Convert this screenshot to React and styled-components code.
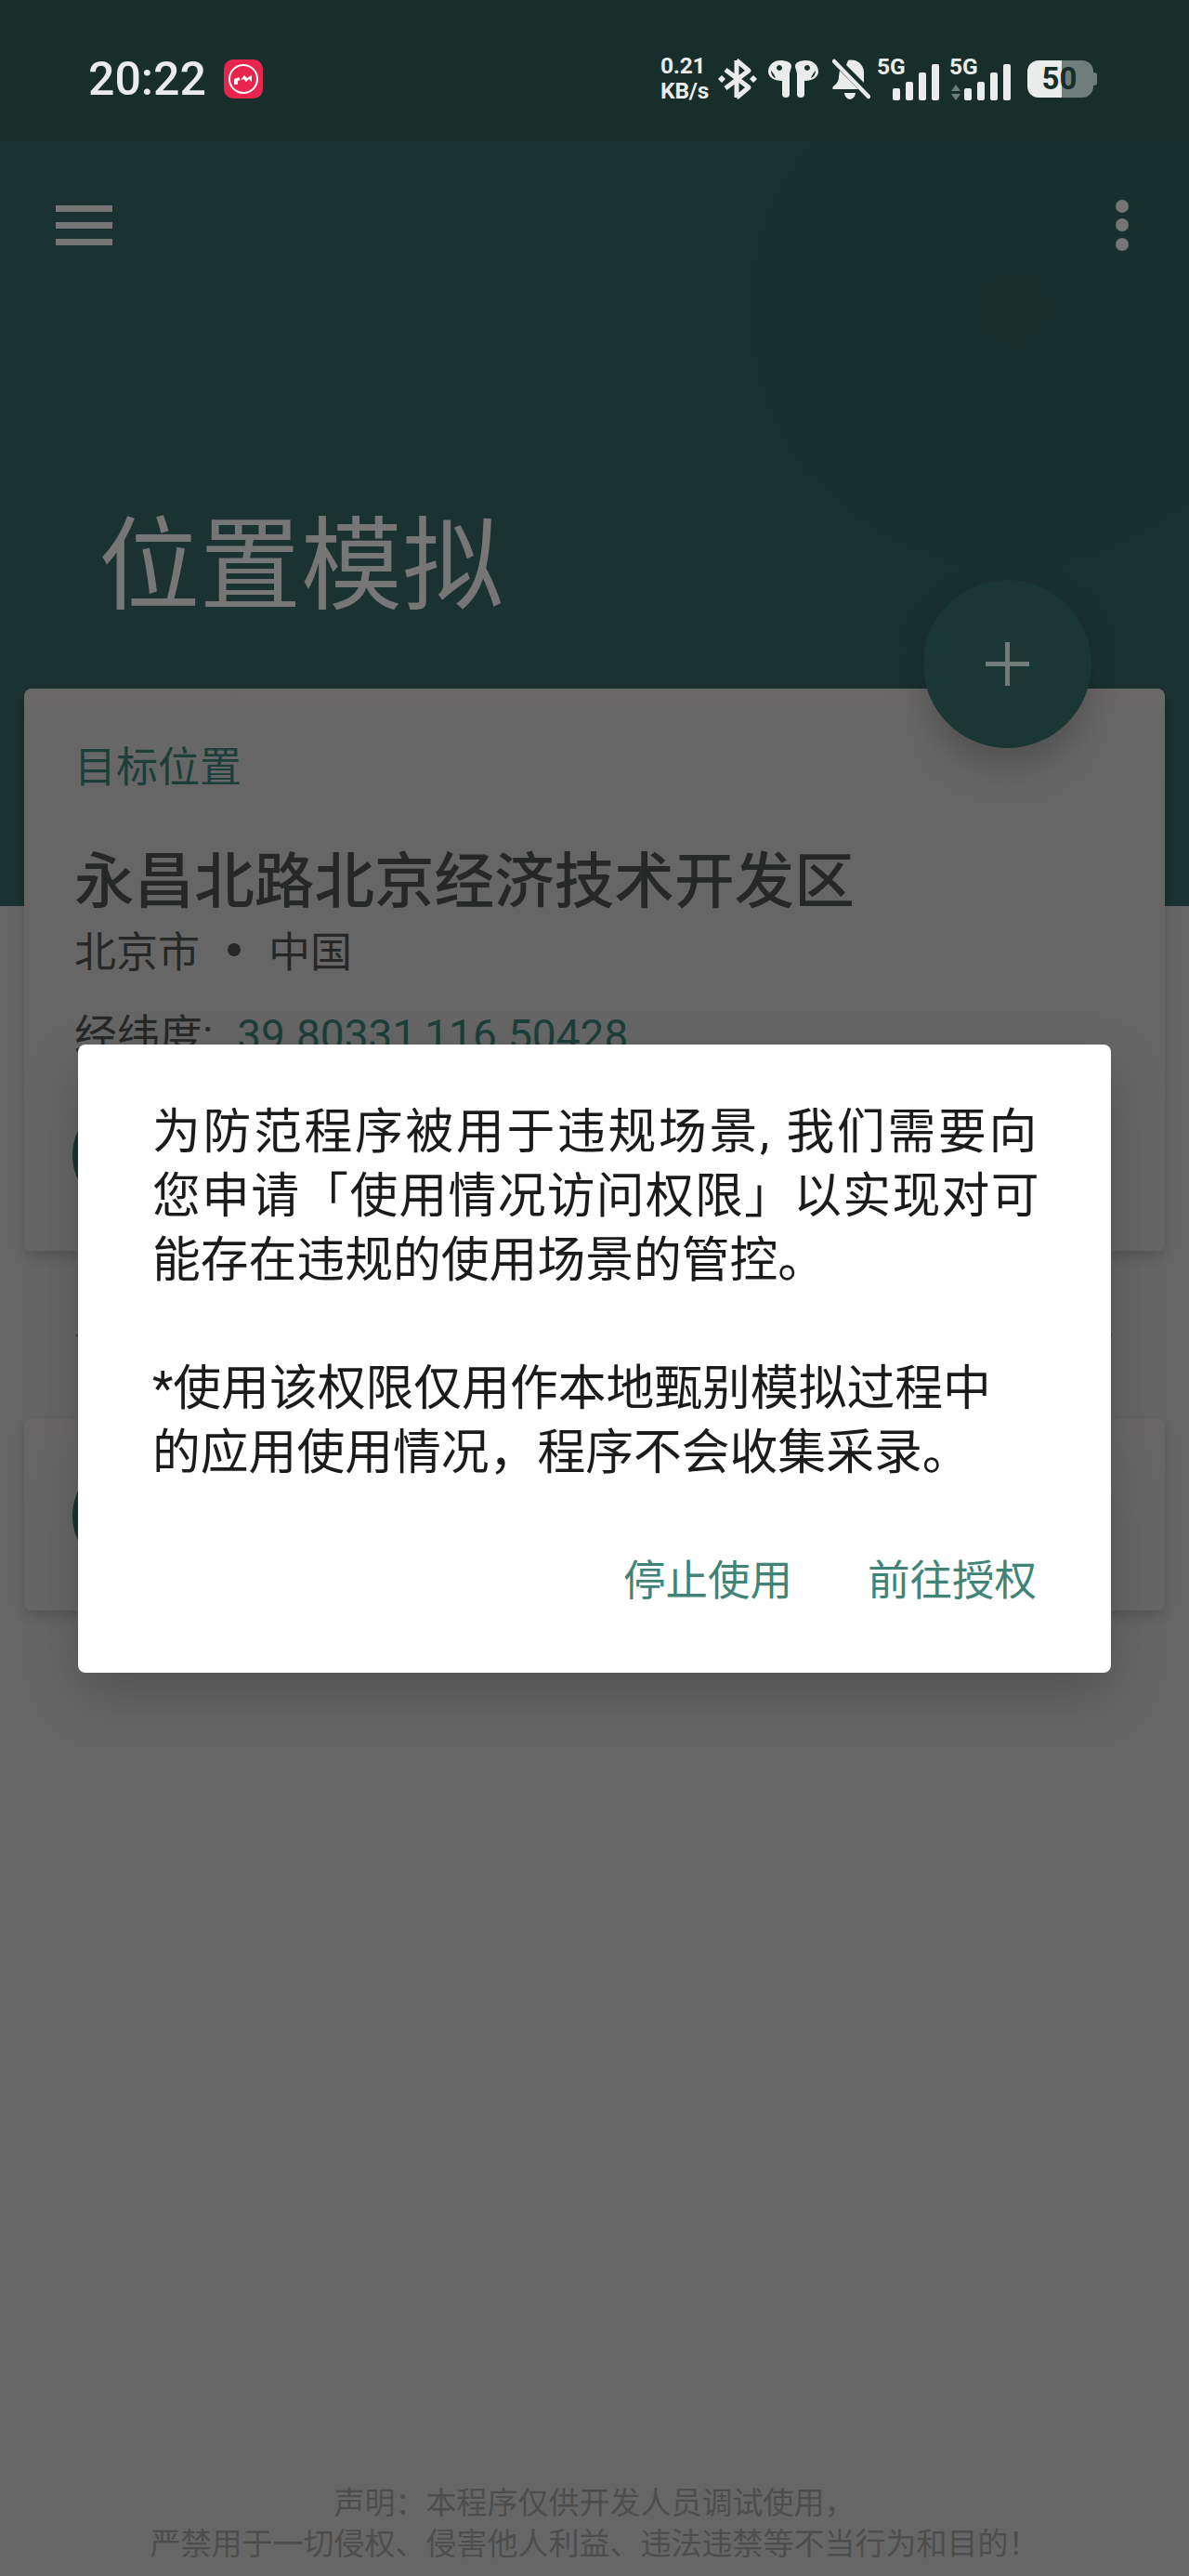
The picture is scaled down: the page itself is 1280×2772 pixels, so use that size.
import React from 'react';
import styled, { createGlobalStyle } from 'styled-components';

const GlobalStyle = createGlobalStyle`
  html, body {
    margin: 0;
    padding: 0;
    background: #666;
  }
  body {
    font-family: Roboto, "Noto Sans CJK SC", sans-serif;
  }
`;

const Page = styled.div`
  position: relative;
  width: 1280px;
  height: 2772px;
  overflow: hidden;
  display: flex;
  flex-direction: column;
  background: #666;
`;

const StatusBar = styled.div`
  height: 152px;
  flex: none;
  display: flex;
  align-items: center;
  padding: 18px 99px 0 95px;
  box-sizing: border-box;
  background: #172e2b;
  color: #e9eceb;
`;

const Clock = styled.div`
  width: 146px;
  font-size: 50px;
  font-weight: 500;
  line-height: 48px;
`;

const AppBadge = styled.svg`
  width: 42px;
  height: 42px;
  flex: none;
`;

const StatusIcons = styled.div`
  margin-left: auto;
  display: flex;
  align-items: center;
  height: 50px;
`;

const NetSpeed = styled.div`
  width: 62px;
  margin-top: -2px;
  font-size: 24.5px;
  font-weight: 700;
  line-height: 27px;
  letter-spacing: -0.2px;
`;

const StatusGlyph = styled.svg`
  flex: none;
  margin-left: ${(p) => p.$gap}px;
  fill: currentColor;
`;

const Signal = styled.div`
  position: relative;
  flex: none;
  width: ${(p) => p.$width}px;
  height: 46px;
  margin-left: ${(p) => p.$gap}px;
  display: flex;
  align-items: flex-end;
  justify-content: flex-end;
  gap: 6px;
`;

const NetType = styled.span`
  position: absolute;
  left: 0;
  top: -1px;
  font-size: 24.5px;
  font-weight: 700;
  line-height: 22px;
`;

const SignalBar = styled.i`
  display: block;
  width: 8px;
  height: ${(p) => p.$h}px;
  border-radius: 2px;
  background: #e9eceb;
`;

const Arrows = styled.svg`
  position: absolute;
  left: 2px;
  bottom: 0;
`;

const Battery = styled.div`
  position: relative;
  flex: none;
  width: 71px;
  height: 40px;
  margin: 0 4px 0 18px;
  border-radius: 12px;
  background: linear-gradient(90deg, #e9eceb 0 37px, #6f7e7b 37px);
  color: #172e2b;
  font-size: 33px;
  font-weight: 700;
  line-height: 40px;
  text-align: center;
  padding-right: 2px;
  box-sizing: border-box;

  &::after {
    content: '';
    position: absolute;
    right: -4px;
    top: 13px;
    width: 4px;
    height: 14px;
    border-radius: 0 3px 3px 0;
    background: #6f7e7b;
  }
`;

const Hero = styled.div`
  position: relative;
  height: 823px;
  flex: none;
  background: radial-gradient(circle at 1090px 180px, #182f2c 0, #1a3330 420px);
`;

const AppBar = styled.div`
  height: 152px;
  display: flex;
  align-items: center;
  justify-content: space-between;
  padding: 28px 65px 0 60px;
  box-sizing: border-box;
`;

const MenuButton = styled.div`
  width: 61px;
  display: flex;
  flex-direction: column;
  gap: 11px;

  i {
    display: block;
    height: 7px;
    background: #757575;
  }
`;

const MoreButton = styled.div`
  display: flex;
  flex-direction: column;
  gap: 6.5px;

  i {
    display: block;
    width: 14px;
    height: 14px;
    border-radius: 50%;
    background: #757575;
  }
`;

const HeroTitle = styled.h1`
  margin: 221px 0 0;
  padding-left: 106px;
  font-size: 109px;
  font-weight: 400;
  line-height: 150px;
  color: #767676;
  font-family: "Noto Sans CJK SC", sans-serif;
`;

const Fab = styled.div`
  position: absolute;
  z-index: 2;
  left: 994px;
  top: 472px;
  width: 181px;
  height: 181px;
  border-radius: 50%;
  background: #1a3733;
  box-shadow: 0 20px 40px rgba(0, 0, 0, 0.22);
  display: flex;
  align-items: center;
  justify-content: center;
  color: #6f7c79;
`;

const Cards = styled.div`
  position: relative;
  margin: -234px 26px 0;
  display: flex;
  flex-direction: column;
`;

const Card = styled.section`
  height: ${(p) => p.$h}px;
  box-sizing: border-box;
  padding: ${(p) => p.$pad}px 54px 0;
  border-radius: 8px;
  background: linear-gradient(180deg, #6a6868 0, #666 120px);
  box-shadow: 0 6px 14px rgba(0, 0, 0, 0.16);
`;

const CardLabel = styled.div`
  font-size: 45px;
  line-height: 60px;
  color: #1c3f3a;
  font-family: "Noto Sans CJK SC", sans-serif;
`;

const Place = styled.div`
  margin-top: 45px;
  font-size: 64.6px;
  font-weight: 500;
  line-height: 90px;
  color: #262827;
  font-family: "Noto Sans CJK SC", sans-serif;
`;

const Region = styled.div`
  display: flex;
  align-items: center;
  margin-top: 3px;
  font-size: 45px;
  line-height: 62px;
  color: #262827;
  font-family: "Noto Sans CJK SC", sans-serif;
`;

const RegionDot = styled.i`
  display: block;
  width: 14px;
  height: 14px;
  margin: 0 30px;
  border-radius: 50%;
  background: #262827;
`;

const Coords = styled.div`
  margin-top: 30px;
  font-size: 46px;
  line-height: 62px;
  color: #262827;

  span {
    color: #1c3f3a;
    margin-left: 26px;
  }
`;

const RoundButton = styled.div`
  width: 126px;
  height: 126px;
  margin: ${(p) => p.$top}px 0 0 -2px;
  border-radius: 50%;
  background: #1a3733;
`;

const SectionRow = styled.div`
  height: 181px;
  display: flex;
  align-items: center;
  justify-content: space-between;
  padding: 0 57px 0 55px;
  color: #3c3c3c;
`;

const SectionDot = styled.i`
  display: block;
  width: 7px;
  height: 7px;
  border-radius: 50%;
  background: #3c3c3c;
`;

const Footer = styled.div`
  margin-top: auto;
  padding-bottom: 15px;
  text-align: center;
  font-size: 33px;
  line-height: 44px;
  color: #4d4d4d;
  font-family: "Noto Sans CJK SC", sans-serif;
`;

const Dialog = styled.div`
  position: absolute;
  z-index: 3;
  left: 84px;
  top: 1124px;
  width: 1112px;
  height: 676px;
  box-sizing: border-box;
  padding: 60px 80px 0;
  border-radius: 8px;
  background: #fff;
  box-shadow: 0 24px 60px rgba(0, 0, 0, 0.2);
`;

const Message = styled.div`
  & + & {
    margin-top: 69px;
  }
`;

const MessageLine = styled.div`
  font-size: 51.8px;
  line-height: 69px;
  color: #1b1b1b;
  white-space: nowrap;
  letter-spacing: ${(p) => p.$tracking || 0}px;
`;

const DialogActions = styled.div`
  display: flex;
  justify-content: flex-end;
  gap: 81px;
  margin-top: 67px;
`;

const ActionButton = styled.div`
  font-size: 45.5px;
  line-height: 64px;
  color: #3f8477;
  font-family: "Noto Sans CJK SC", sans-serif;
`;

const BluetoothIcon = () => (
  <StatusGlyph $gap={0} width="42" height="46" viewBox="0 0 42 46">
    <path d="M20 3 L33 14 L8 33 M20 43 L33 32 L8 13 M20 3 V43" fill="none" stroke="currentColor" strokeWidth="5" strokeLinejoin="round" />
    <path d="M4 19 L8 23 L4 27 L0 23 Z M38 19 L42 23 L38 27 L34 23 Z" />
  </StatusGlyph>
);

const EarbudsIcon = () => (
  <StatusGlyph $gap={12} width="54" height="40" viewBox="0 0 54 40">
    <path fillRule="evenodd" d="M13 0 C5 0 0 6 0 12 C0 18 6 22 15 22 L15 37 C15 39 17 40 19 40 C21 40 23 39 23 37 L23 14 C24 10 25 8 25 6 C25 2 19 0 13 0 Z M12 5 a3 3 0 1 0 .01 0 Z M3 11 C3 15 5 18 8 19 C7 16 5 13 3 11 Z" />
    <path fillRule="evenodd" d="M41 0 C49 0 54 6 54 12 C54 18 48 22 39 22 L39 37 C39 39 37 40 35 40 C33 40 31 39 31 37 L31 14 C30 10 29 8 29 6 C29 2 35 0 41 0 Z M42 5 a3 3 0 1 0 .01 0 Z M51 11 C51 15 49 18 46 19 C47 16 49 13 51 11 Z" />
  </StatusGlyph>
);

const MutedBellIcon = () => (
  <StatusGlyph $gap={15} width="41" height="45" viewBox="0 0 41 45">
    <path d="M17 2 C25 0 33 5 34 14 L34 26 L15 7 Z" />
    <path d="M8 13 L28 33 L1 33 C0 33 0 31 1 30 C5 27 7 24 7 19 Z" />
    <path d="M13 37 H25 C24 46 14 46 13 37 Z" />
    <path d="M2 3 L39 41" stroke="currentColor" strokeWidth="4.5" strokeLinecap="round" fill="none" />
  </StatusGlyph>
);

const SignalIcon = ({ gap, width, arrows }) => (
  <Signal $gap={gap} $width={width}>
    <NetType>5G</NetType>
    {arrows && (
      <Arrows width="10" height="17" viewBox="0 0 10 17">
        <path d="M5 0 L10 7 H0 Z M0 10 H10 L5 17 Z" fill="#6f7e7b" />
      </Arrows>
    )}
    <SignalBar $h={13} />
    <SignalBar $h={20} />
    <SignalBar $h={30} />
    <SignalBar $h={39} />
  </Signal>
);

const App = () => (
  <Page>
    <GlobalStyle />
    <StatusBar>
      <Clock>20:22</Clock>
      <AppBadge viewBox="0 0 42 42">
        <rect width="42" height="42" rx="10" fill="#e8254f" />
        <circle cx="21" cy="21" r="15" fill="none" stroke="#fff" strokeWidth="2" />
        <path d="M11 27 V21 L17 19 V23 L22 17 L25 20 L30 17 V24 L27 21 L24 24 L21 21 L15 23 L15 27 Z" fill="#fff" />
      </AppBadge>
      <StatusIcons>
        <NetSpeed>
          0.21
          <br />
          KB/s
        </NetSpeed>
        <BluetoothIcon />
        <EarbudsIcon />
        <MutedBellIcon />
        <SignalIcon gap={7} width={67} />
        <SignalIcon gap={11} width={66} arrows />
        <Battery>50</Battery>
      </StatusIcons>
    </StatusBar>

    <Hero>
      <AppBar>
        <MenuButton>
          <i />
          <i />
          <i />
        </MenuButton>
        <MoreButton>
          <i />
          <i />
          <i />
        </MoreButton>
      </AppBar>
      <HeroTitle>位置模拟</HeroTitle>
      <Fab>
        <svg width="47" height="47" viewBox="0 0 47 47">
          <path d="M23.5 0 V47 M0 23.5 H47" stroke="currentColor" strokeWidth="5" />
        </svg>
      </Fab>
    </Hero>

    <Cards>
      <Card $h={605} $pad={52}>
        <CardLabel>目标位置</CardLabel>
        <Place>永昌北路北京经济技术开发区</Place>
        <Region>
          北京市
          <RegionDot />
          中国
        </Region>
        <Coords>
          经纬度:<span>39.80331,116.50428</span>
        </Coords>
        <RoundButton $top={35} />
      </Card>
      <SectionRow>
        <svg width="10" height="12" viewBox="0 0 10 12">
          <path d="M0 6 L10 0 V12 Z" fill="currentColor" />
        </svg>
        <SectionDot />
      </SectionRow>
      <Card $h={206} $pad={41}>
        <RoundButton $top={0} />
      </Card>
    </Cards>

    <Footer>
      声明：本程序仅供开发人员调试使用，
      <br />
      严禁用于一切侵权、侵害他人利益、违法违禁等不当行为和目的！
    </Footer>

    <Dialog>
      <Message>
        <MessageLine $tracking={2.7}>为防范程序被用于违规场景, 我们需要向</MessageLine>
        <MessageLine $tracking={1.3}>您申请「使用情况访问权限」以实现对可</MessageLine>
        <MessageLine>能存在违规的使用场景的管控。</MessageLine>
      </Message>
      <Message>
        <MessageLine>*使用该权限仅用作本地甄别模拟过程中</MessageLine>
        <MessageLine>的应用使用情况，程序不会收集采录。</MessageLine>
      </Message>
      <DialogActions>
        <ActionButton>停止使用</ActionButton>
        <ActionButton>前往授权</ActionButton>
      </DialogActions>
    </Dialog>
  </Page>
);

export default App;
